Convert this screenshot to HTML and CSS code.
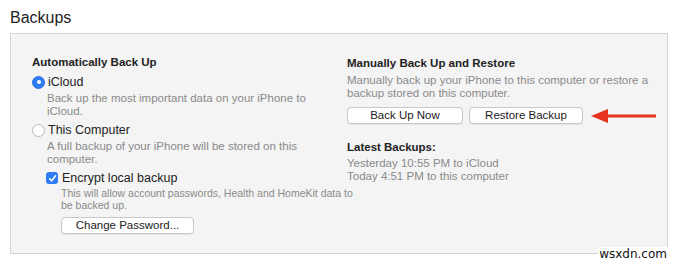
FILE: index.html
```html
<!DOCTYPE html>
<html>
<head>
<meta charset="utf-8">
<link rel="stylesheet" href="styles.css">
</head>
<body>
<div class="page">
  <h1 class="title">Backups</h1>
  <div class="box">
    <div class="col left">
      <div class="heading">Automatically Back Up</div>
      <div class="option">
        <span class="radio checked"></span>
        <span class="label">iCloud</span>
      </div>
      <div class="desc indent">Back up the most important data on your iPhone to<br>iCloud.</div>
      <div class="option">
        <span class="radio"></span>
        <span class="label">This Computer</span>
      </div>
      <div class="desc indent">A full backup of your iPhone will be stored on this<br>computer.</div>
      <div class="sub">
        <div class="option">
          <span class="check"><svg width="9" height="9" viewBox="0 0 9 9"><path d="M1.6 4.8 L3.6 6.8 L7.6 1.8" fill="none" stroke="#fff" stroke-width="1.6" stroke-linecap="round" stroke-linejoin="round"/></svg></span>
          <span class="label">Encrypt local backup</span>
        </div>
        <div class="small indent2">This will allow account passwords, Health and HomeKit data to<br>be backed up.</div>
        <button class="btn pw">Change Password...</button>
      </div>
    </div>
    <div class="col right">
      <div class="heading">Manually Back Up and Restore</div>
      <div class="desc">Manually back up your iPhone to this computer or restore a<br>backup stored on this computer.</div>
      <div class="btnrow">
        <button class="btn bu">Back Up Now</button>
        <button class="btn rb">Restore Backup</button>
        <svg class="arrow" width="66" height="16" viewBox="0 0 66 16"><path d="M14 8 H65" stroke="#e8321e" stroke-width="3"/><path d="M0 8 L17 1 L17 15 Z" fill="#e8321e"/></svg>
      </div>
      <div class="heading lb">Latest Backups:</div>
      <div class="desc">Yesterday 10:55 PM to iCloud<br>Today 4:51 PM to this computer</div>
    </div>
  </div>
  <div class="wm">wsxdn.com</div>
</div>
</body>
</html>
```
FILE: styles.css
```css
* { box-sizing: border-box; }
html, body { margin: 0; padding: 0; background: #fff; }
body { font-family: "Liberation Sans", Arial, sans-serif; color: #222; }
.page { width: 680px; height: 267px; padding: 7px 12px 0 10px; position: relative; }
.title { margin: 0; font-weight: normal; font-size: 16px; line-height: 21px; color: #1e1e1e; }
.box {
  margin-top: 5px;
  height: 221px;
  background: #f4f4f4;
  border: 1px solid #d5d5d5;
  display: grid;
  grid-template-columns: 315px 1fr;
  padding: 21px 0 0 21px;
}
.heading { font-weight: bold; font-size: 11.5px; line-height: 14px; color: #222; white-space: nowrap; }
.left .heading { margin-bottom: 4px; }
.option { display: flex; align-items: center; gap: 3px; height: 18px; font-size: 12.5px; color: #222; }
.radio {
  width: 13px; height: 13px; border-radius: 50%;
  background: #fff; border: 1px solid #b5b5b5;
  display: inline-block;
}
.radio.checked {
  background: #2e7cf6; border: 1px solid #2a6fe0;
  position: relative;
}
.radio.checked::after {
  content: ""; position: absolute; left: 3.5px; top: 3.5px;
  width: 4px; height: 4px; border-radius: 50%; background: #fff;
}
.desc { font-size: 11.5px; line-height: 13px; color: #8a8a8a; white-space: nowrap; }
.indent { padding-left: 15px; margin-bottom: 3px; margin-top: 1px; }
.sub { padding-left: 14px; margin-top: 1px; }
.check {
  width: 12px; height: 12px; border-radius: 3px; background: #2e7cf6;
  display: inline-flex; align-items: center; justify-content: center; margin-right: 1px;
}
.small { font-size: 10.5px; line-height: 11.5px; color: #8a8a8a; margin-top: 1px; white-space: nowrap; }
.indent2 { padding-left: 15px; }
.btn {
  font-family: inherit; font-size: 11.5px; color: #222;
  background: #fff; border: 1px solid #c8c8c8; border-radius: 4px;
  height: 17px; padding: 0; line-height: 15px;
  box-shadow: 0 1px 0 rgba(0,0,0,0.06);
  display: block;
}
.pw { width: 133px; margin-left: 15px; margin-top: 6px; }
.right { padding-left: 0; padding-top: 1px; }
.right .heading { margin-bottom: 4px; }
.btnrow { display: flex; align-items: center; margin-top: 7px; }
.bu { width: 116px; }
.rb { width: 114px; margin-left: 6px; }
.arrow { margin-left: 8px; }
.lb { margin-top: 16px; margin-bottom: 3px !important; }
.wm { position: absolute; right: 12px; top: 247px; font-family: "DejaVu Sans", sans-serif; font-size: 12px; color: #111; background: #fff; padding: 0 1px; }
```
